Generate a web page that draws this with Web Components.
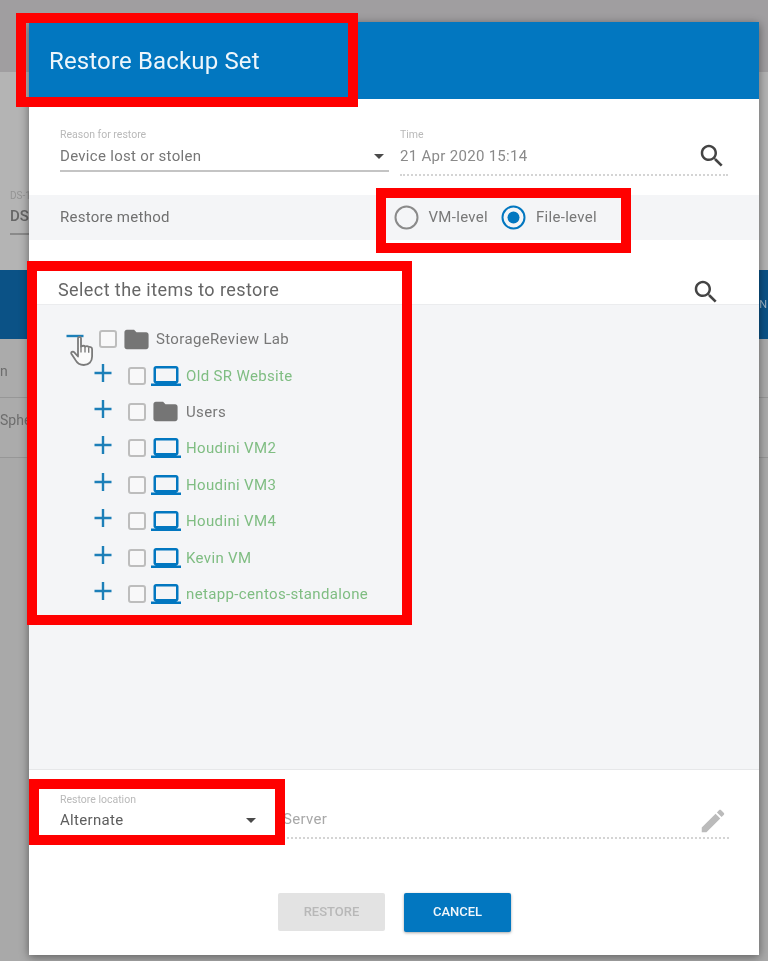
<!DOCTYPE html>
<html lang="en">
<head>
<meta charset="utf-8">
<title>Restore Backup Set</title>
<style>
  html, body { margin: 0; padding: 0; }
  body { width: 768px; height: 961px; overflow: hidden; position: relative; background: #a9a9a9; font-family: Roboto, "Liberation Sans", sans-serif; }
</style>
</head>
<body>
<page-backdrop></page-backdrop>

<restore-dialog>
  <form-field slot="form" label="Reason for restore" value="Device lost or stolen" kind="select" style="width:329px"></form-field>
  <form-field slot="form" label="Time" value="21 Apr 2020 15:14" kind="search" style="width:328px;margin-left:11px"></form-field>

  <radio-option slot="method" label="VM-level"></radio-option>
  <radio-option slot="method" label="File-level" checked></radio-option>

  <tree-row slot="tree" expander="minus" kind="folder" root>StorageReview Lab</tree-row>
  <tree-row slot="tree" kind="vm">Old SR Website</tree-row>
  <tree-row slot="tree" kind="folder">Users</tree-row>
  <tree-row slot="tree" kind="vm">Houdini VM2</tree-row>
  <tree-row slot="tree" kind="vm">Houdini VM3</tree-row>
  <tree-row slot="tree" kind="vm">Houdini VM4</tree-row>
  <tree-row slot="tree" kind="vm">Kevin VM</tree-row>
  <tree-row slot="tree" kind="vm">netapp-centos-standalone</tree-row>

  <form-field slot="location" label="Restore location" value="Alternate" kind="select" bare style="width:205px"></form-field>
  <form-field slot="location" value="Server" kind="edit" style="width:446px;margin:-2px 0 0 18px"></form-field>

  <action-button slot="actions" disabled>RESTORE</action-button>
  <action-button slot="actions" primary>CANCEL</action-button>
</restore-dialog>

<mark-box style="left:16px;top:13px;width:342px;height:94px"></mark-box>
<mark-box style="left:376px;top:188px;width:255px;height:65px"></mark-box>
<mark-box style="left:27px;top:261px;width:385px;height:364px"></mark-box>
<mark-box style="left:29px;top:779px;width:256px;height:66px"></mark-box>
<hand-cursor></hand-cursor>

<script>
const ICONS = {
  search: 'M15.5 14h-.79l-.28-.27C15.41 12.59 16 11.11 16 9.5 16 5.91 13.09 3 9.5 3S3 5.91 3 9.5 5.91 16 9.5 16c1.61 0 3.09-.59 4.23-1.57l.27.28v.79l5 4.99L20.49 19l-4.99-5zm-6 0C7.01 14 5 11.99 5 9.5S7.01 5 9.5 5 14 7.01 14 9.5 11.99 14 9.5 14z',
  folder: 'M10 4H4c-1.1 0-1.99.9-1.99 2L2 18c0 1.1.9 2 2 2h16c1.1 0 2-.9 2-2V8c0-1.1-.9-2-2-2h-8l-2-2z',
  vm: 'M20 18c1.1 0 1.99-.9 1.99-2L22 6c0-1.1-.9-2-2-2H4c-1.1 0-2 .9-2 2v10c0 1.1.9 2 2 2H0v2h24v-2h-4zM4 6h16v10H4V6z',
  edit: 'M3 17.25V21h3.75L17.81 9.94l-3.75-3.75L3 17.25zM20.71 7.04c.39-.39.39-1.02 0-1.41l-2.34-2.34c-.39-.39-1.02-.39-1.41 0l-1.83 1.83 3.75 3.75 1.83-1.83z',
  plus: 'M3.500 10.800h17v2.400h-17z M10.800 3h2.400v18h-2.400z',
  minus: 'M3.500 10.800h17v2.400h-17z'
};

function icon(name, size, color) {
  return `<svg width="${size}" height="${size}" viewBox="0 0 24 24" fill="${color}" style="display:block;flex:none"><path d="${ICONS[name]}"/></svg>`;
}

/**
 * Dimmed page behind the dialog
 */
class PageBackdrop extends HTMLElement {
  constructor() {
    super();
    this.attachShadow({ mode: 'open' });
  }

  connectedCallback() {
    this.shadowRoot.innerHTML = `
      <style>
        :host {
          position: absolute;
          inset: 0;
          display: flex;
          flex-direction: column;
          color: #6d6d6d;
          font-size: 14px;
          filter: blur(0.7px);
        }
        .top { height: 72px; background: #a09ea0; flex: none; }
        .filter { height: 198px; flex: none; background: #b4b4b4; padding: 117px 0 0 10px; box-sizing: border-box; }
        .small { font-size: 10px; color: #949494; line-height: 14px; }
        .ds { font-weight: 500; font-size: 15px; line-height: 20px; padding-top: 3px; color: #666; }
        .rule { height: 2px; width: 30px; background: #8a8a8a; margin-top: 7px; }
        .band { height: 69px; flex: none; background: #0b5286; color: #9db4c6; font-size: 11px; display: flex; justify-content: flex-end; align-items: center; }
        .band span { margin-right: 1px; }
        .row { flex: none; box-sizing: border-box; border-bottom: 1px solid #979797; background: #ababab; display: flex; align-items: center; }
        .row.first { height: 59px; padding-top: 5px; }
        .row.second { height: 60px; padding-bottom: 16px; }
        .rest { flex: 1; background: #a9a9a9; }
      </style>
      <div class="top"></div>
      <div class="filter">
        <div class="small">DS-1</div>
        <div class="ds">DS-1</div>
        <div class="rule"></div>
      </div>
      <div class="band"><span>N</span></div>
      <div class="row first"><span>n</span></div>
      <div class="row second"><span>Sphere</span></div>
      <div class="rest"></div>
    `;
  }
}

/**
 * Restore dialog shell, sections come in through slots
 */
class RestoreDialog extends HTMLElement {
  constructor() {
    super();
    this.attachShadow({ mode: 'open' });
  }

  connectedCallback() {
    this.shadowRoot.innerHTML = `
      <style>
        :host {
          position: absolute;
          left: 29px;
          top: 22px;
          width: 730px;
          height: 933px;
          display: flex;
          flex-direction: column;
          background: #fff;
          box-shadow: 0 2px 9px rgba(0,0,0,0.45);
          font-family: Roboto, "Liberation Sans", sans-serif;
          color: #707070;
        }
        header {
          height: 77px;
          flex: none;
          box-sizing: border-box;
          background: #0277c0;
          color: #eef6fb;
          font-size: 24px;
          line-height: 79px;
          padding-left: 20px;
          letter-spacing: 0.15px;
          filter: blur(0.4px);
        }
        .form { height: 96px; flex: none; box-sizing: border-box; display: flex; padding: 29px 0 0 31px; }
        .method {
          height: 45px;
          flex: none;
          box-sizing: border-box;
          background: #f4f5f7;
          display: flex;
          align-items: center;
          padding-left: 31px;
          font-size: 15px;
          letter-spacing: 0.25px;
        }
        .method-label { width: 333.5px; filter: blur(0.4px); transform: translateY(-1px); }
        .options { display: flex; gap: 13px; }
        .title {
          height: 65px;
          flex: none;
          box-sizing: border-box;
          display: flex;
          justify-content: space-between;
          align-items: flex-end;
          padding: 0 38.5px 1px 29px;
          border-bottom: 1px solid #ebecee;
        }
        .title span { font-size: 18px; line-height: 30px; margin-bottom: -2px; letter-spacing: 0.42px; color: #666; filter: blur(0.4px); }
        .title svg { margin-bottom: -4px; }
        .tree { height: 465px; flex: none; box-sizing: border-box; background: #f4f5f7; padding-top: 16px; border-bottom: 1px solid #e6e7e9; }
        .location { height: 85px; flex: none; box-sizing: border-box; display: flex; padding: 23px 0 0 31px; }
        .actions { display: flex; justify-content: center; gap: 19px; padding: 38px 0 0 0; margin-left: 1px; }
      </style>
      <header>Restore Backup Set</header>
      <div class="form"><slot name="form"></slot></div>
      <div class="method">
        <span class="method-label">Restore method</span>
        <div class="options"><slot name="method"></slot></div>
      </div>
      <div class="title">
        <span>Select the items to restore</span>
        ${icon('search', 30, '#444')}
      </div>
      <div class="tree"><slot name="tree"></slot></div>
      <div class="location"><slot name="location"></slot></div>
      <div class="actions"><slot name="actions"></slot></div>
    `;
  }
}

/**
 * Labelled field: select, read-only search or edit
 */
class FormField extends HTMLElement {
  constructor() {
    super();
    this.attachShadow({ mode: 'open' });
  }

  connectedCallback() {
    const kind = this.getAttribute('kind');
    const label = this.getAttribute('label') || '';
    const value = this.getAttribute('value') || '';
    const bare = this.hasAttribute('bare');
    let tail = '<span class="arrow"></span>';
    if (kind === 'search') tail = icon('search', 30, '#444');
    if (kind === 'edit') tail = icon('edit', 30, '#bbbbbb');
    let cls = 'line';
    if (kind !== 'select') cls += ' dotted';
    if (kind === 'edit') cls += ' edit';
    if (bare) cls += ' bare';

    this.shadowRoot.innerHTML = `
      <style>
        :host { display: block; flex: none; color: #767676; }
        .label { font-size: 10.5px; line-height: 14px; height: 14px; color: #b9b9b9; filter: blur(0.3px); }
        .line {
          height: 28px;
          display: flex;
          align-items: center;
          justify-content: space-between;
          border-bottom: 2px solid #c4c4c4;
        }
        .line.dotted { padding-bottom: 4px; border-bottom: 2px dotted #d4d4d4; }
        .line.bare { height: 26px; border: 0; color: #5d5d5d; }
        .bare .arrow { margin-right: 9px; }
        .value { font-size: 15px; letter-spacing: 0.3px; filter: blur(0.4px); }
        .dotted .value { color: #8a8a8a; }
        .edit .value { color: #a8a8a8; }
        .arrow {
          width: 0;
          height: 0;
          margin-right: 5px;
          border: 5.5px solid transparent;
          border-top: 5.5px solid #4a4a4a;
          border-bottom: 0;
        }
        .dotted svg { margin-right: 1px; }
        .edit svg { transform: translateY(2px); }
      </style>
      <div class="label">${label}</div>
      <div class="${cls}"><span class="value">${value}</span>${tail}</div>
    `;
  }
}

/**
 * Radio button with its label
 */
class RadioOption extends HTMLElement {
  constructor() {
    super();
    this.attachShadow({ mode: 'open' });
  }

  connectedCallback() {
    const checked = this.hasAttribute('checked');
    const stroke = checked ? '#0277c0' : '#8a8a8a';
    const dot = checked ? '<circle cx="12.5" cy="12.5" r="6" fill="#0277c0"/>' : '';
    this.shadowRoot.innerHTML = `
      <style>
        :host { display: flex; align-items: center; gap: 10px; font-size: 15px; color: #787878; letter-spacing: 0.3px; }
        span { filter: blur(0.4px); transform: translateY(-1px); }
      </style>
      <svg width="25" height="25" viewBox="0 0 25 25" style="display:block">
        <circle cx="12.5" cy="12.5" r="11" fill="none" stroke="${stroke}" stroke-width="2"/>${dot}
      </svg>
      <span>${this.getAttribute('label')}</span>
    `;
  }
}

/**
 * One row of the restore tree
 */
class TreeRow extends HTMLElement {
  constructor() {
    super();
    this.attachShadow({ mode: 'open' });
  }

  connectedCallback() {
    const kind = this.getAttribute('kind');
    const expander = this.getAttribute('expander') || 'plus';
    const root = this.hasAttribute('root');
    const glyph = kind === 'vm' ? icon('vm', 30, '#0277c0') : icon('folder', 29, '#757575');
    this.shadowRoot.innerHTML = `
      <style>
        :host {
          display: flex;
          align-items: center;
          height: 36.4px;
          padding-left: ${root ? 34 : 62}px;
          font-size: 15px;
          letter-spacing: 0.35px;
          color: ${kind === 'vm' ? '#7fbd82' : '#777'};
        }
        .exp { width: 24px; transform: translateY(-3px); flex: none; }
        .box {
          width: 14px;
          height: 14px;
          border: 2px solid #bdbdbd;
          border-radius: 3px;
          margin: 0 5px 0 ${root ? 12 : 13}px;
          background: #f8f8f9;
          flex: none;
        }
        .label { margin-left: ${kind === 'vm' ? 5 : (root ? 5 : 6)}px; white-space: nowrap; filter: blur(0.4px); }
      </style>
      <div class="exp">${icon(expander, 24, '#1c7fb8')}</div>
      <div class="box"></div>
      ${glyph}
      <div class="label"><slot></slot></div>
    `;
  }
}

/**
 * Footer button
 */
class ActionButton extends HTMLElement {
  constructor() {
    super();
    this.attachShadow({ mode: 'open' });
  }

  connectedCallback() {
    const primary = this.hasAttribute('primary');
    this.shadowRoot.innerHTML = `
      <style>
        :host {
          display: flex;
          align-items: center;
          justify-content: center;
          width: 107px;
          height: ${primary ? 39 : 38}px;
          box-sizing: border-box;
          border-radius: 2px;
          font-size: 13px;
          font-weight: 500;
          background: ${primary ? '#0277c0' : '#e3e3e3'};
          color: ${primary ? '#f2f7fb' : '#b8b8b8'};
          box-shadow: ${primary ? '0 1px 3px rgba(0,0,0,0.35)' : 'none'};
        }
        span { filter: blur(0.4px); transform: translateY(-1px); }
      </style>
      <span><slot></slot></span>
    `;
  }
}

/**
 * Red annotation rectangle drawn over the screenshot
 */
class MarkBox extends HTMLElement {
  constructor() {
    super();
    this.attachShadow({ mode: 'open' });
  }

  connectedCallback() {
    this.shadowRoot.innerHTML = `
      <style>
        :host { position: absolute; display: block; box-sizing: border-box; border: 10px solid #ff0000; pointer-events: none; }
      </style>
    `;
  }
}

/**
 * Hand pointer hovering over the first expander
 */
class HandCursor extends HTMLElement {
  constructor() {
    super();
    this.attachShadow({ mode: 'open' });
  }

  connectedCallback() {
    this.shadowRoot.innerHTML = `
      <style>
        :host { position: absolute; left: 70px; top: 335px; display: block; filter: blur(0.4px); }
      </style>
      <svg width="25" height="32" viewBox="0 0 25 32" style="display:block">
        <path d="M8 3.2c0-1.8 3-1.8 3 0v8.3c1.7-.9 3.3-.9 4 .1 1.4-.7 3-.5 3.7.5 1.6-.4 3.4.2 3.4 2.1v7.3c0 4.800-3.100 8.500-8.300 8.500-4.600 0-6.700-1.900-8.600-5.400L1.500 19c-1-1.800 1.400-3.300 2.800-1.700L8 21.500z" fill="#fafafa" stroke="#7b7b7b" stroke-width="1.800" stroke-linejoin="round"/>
        <path d="M11 11.500v6M15 11.600v6M18.700 12.800v5" fill="none" stroke="#7b7b7b" stroke-width="1.400"/>
      </svg>
    `;
  }
}

customElements.define('page-backdrop', PageBackdrop);
customElements.define('restore-dialog', RestoreDialog);
customElements.define('form-field', FormField);
customElements.define('radio-option', RadioOption);
customElements.define('tree-row', TreeRow);
customElements.define('action-button', ActionButton);
customElements.define('mark-box', MarkBox);
customElements.define('hand-cursor', HandCursor);
</script>
</body>
</html>
